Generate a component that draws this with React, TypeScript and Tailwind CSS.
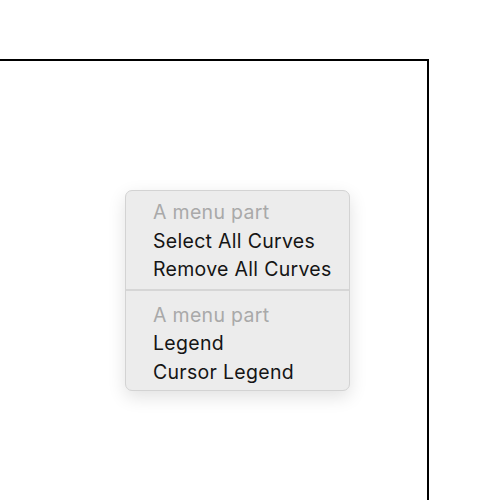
const sections = [
  { title: "A menu part", items: ["Select All Curves", "Remove All Curves"] },
  { title: "A menu part", items: ["Legend", "Cursor Legend"] },
];

export default function App() {
  return (
    <div className="w-[501px] h-[500px] overflow-hidden bg-white relative" style={{ fontFamily: "Inter, 'Noto Sans', sans-serif" }}>
      <div className="absolute left-[-10px] top-[59px] w-[439px] h-[460px] border-2 border-black" />
      <div className="absolute left-[125px] top-[190px] w-[225px] rounded-[7px] border border-[#d3d3d3] bg-[#ececec] shadow-[0_6px_18px_rgba(0,0,0,0.12)] overflow-hidden">
        {sections.map((s, i) => (
          <div key={i} className={i > 0 ? "border-t-2 border-[#d6d6d6] pt-[10px] pb-[4px]" : "pt-[7px] pb-[5px]"}>
            <div className="pl-[27px] h-[28.5px] leading-[28.5px] text-[19.5px] tracking-[0.3px] text-[#a9a9a9]">{s.title}</div>
            {s.items.map((it) => (
              <div key={it} className="pl-[27px] h-[28.5px] leading-[28.5px] text-[19.5px] tracking-[0.3px] text-[#151515]">
                {it}
              </div>
            ))}
          </div>
        ))}
      </div>
    </div>
  );
}
